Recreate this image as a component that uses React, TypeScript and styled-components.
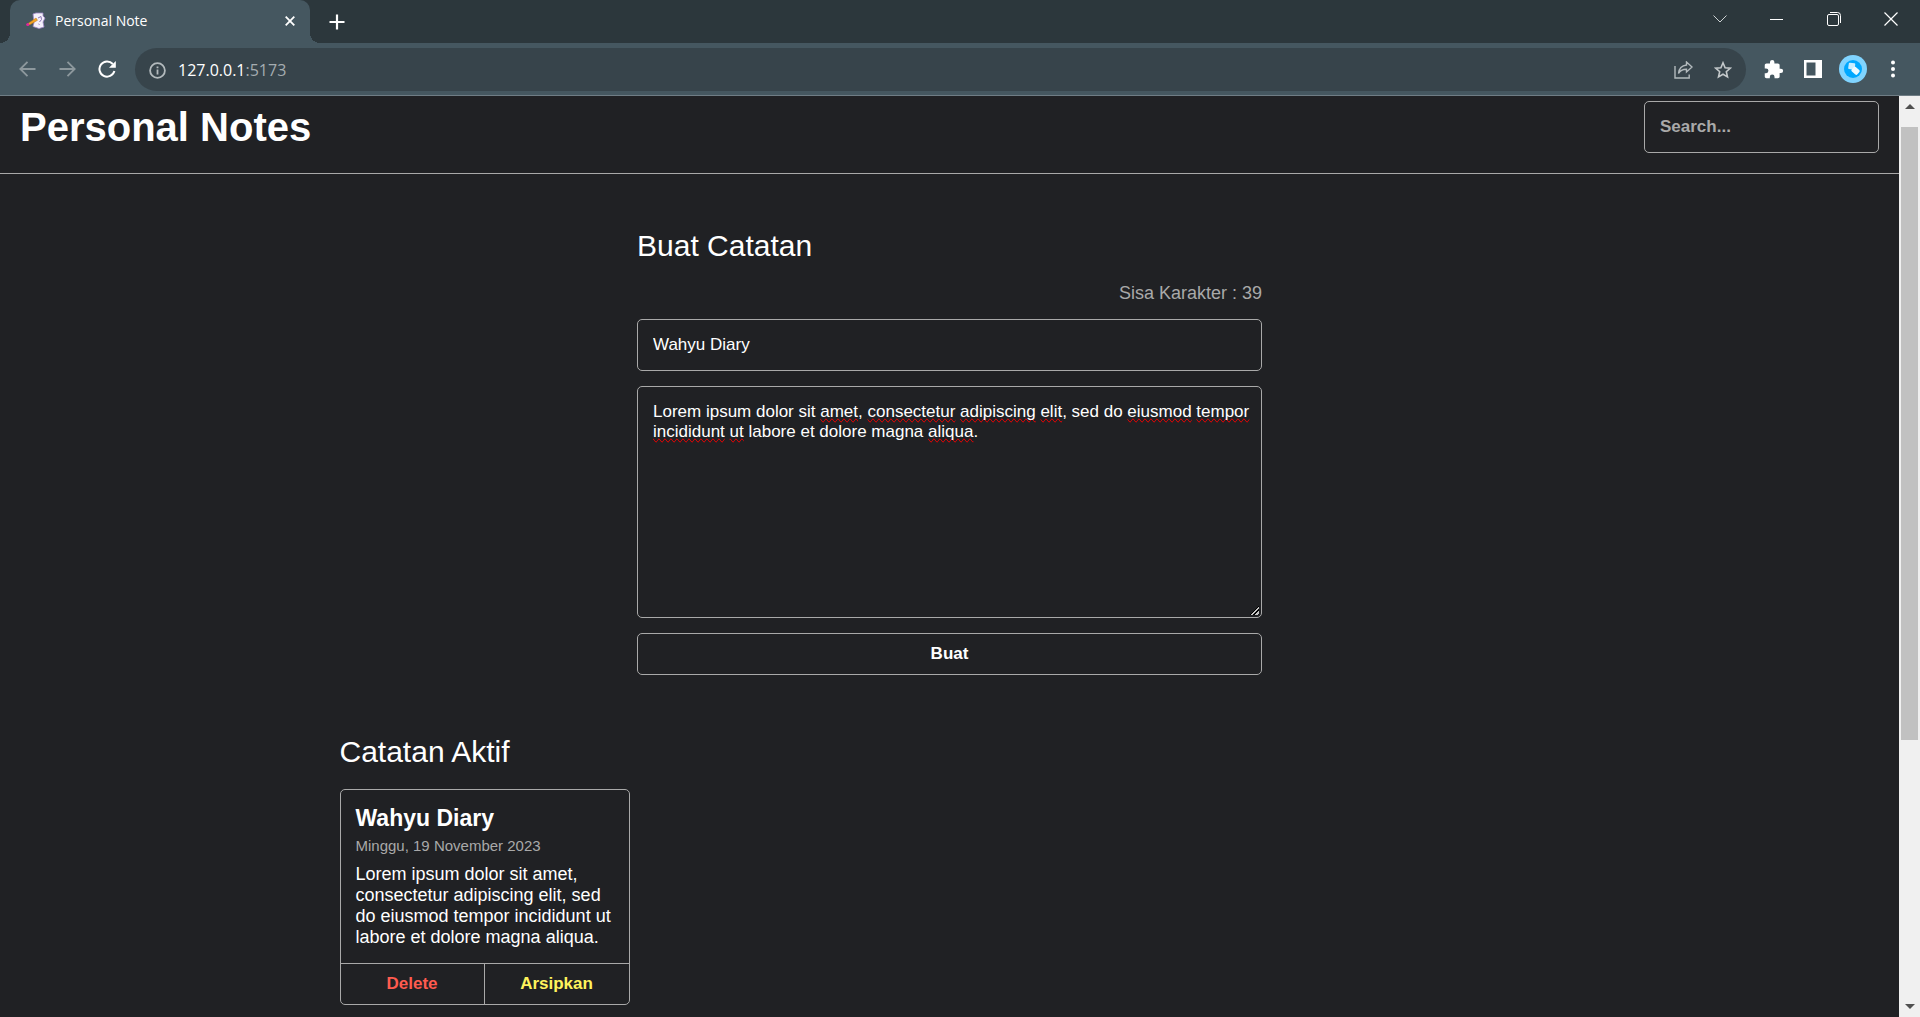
import React, { useState } from "react";
import styled, { createGlobalStyle, css } from "styled-components";

const SANS = `"Liberation Sans", Arial, Helvetica, sans-serif`;
const UI = `"Open Sans", "Segoe UI", sans-serif`;

const GlobalStyle = createGlobalStyle`
  *, *::before, *::after { box-sizing: border-box; }
  body { margin: 0; background: #202124; color: #fff; font-family: ${SANS}; overflow: hidden; }
  h1, h2, h3, p { margin: 0; }
  button, input, textarea { font-family: inherit; color: inherit; background: none; border: 0; padding: 0; margin: 0; }
  button { cursor: pointer; }
  svg { display: block; }
`;

const Window = styled.div`
  display: flex;
  flex-direction: column;
  height: 100vh;
`;

const TabStrip = styled.div`
  flex: none;
  display: flex;
  height: 43px;
  padding: 0 1px 0 10px;
  background: #2c373c;
  font-family: ${UI};
`;

const Tab = styled.div`
  position: relative;
  display: flex;
  align-items: center;
  gap: 9px;
  width: 300px;
  padding: 0 12px 2px 16px;
  border-radius: 10px 10px 0 0;
  background: #455760;
  font-size: 14px;
  line-height: 20px;

  &::before,
  &::after {
    content: "";
    position: absolute;
    bottom: 0;
    width: 10px;
    height: 10px;
  }
  &::before {
    right: 100%;
    background: radial-gradient(circle at 0 0, transparent 10px, #455760 10px);
  }
  &::after {
    left: 100%;
    background: radial-gradient(circle at 100% 0, transparent 10px, #455760 10px);
  }
`;

const TabTitle = styled.span`
  flex: 1;
`;

const IconButton = styled.button<{ $w: number; $dim?: boolean }>`
  flex: none;
  display: grid;
  place-items: center;
  width: ${(p) => p.$w}px;
  color: ${(p) => (p.$dim ? "#8d989d" : "#fff")};
`;

const WindowControls = styled.div`
  display: flex;
  margin-left: auto;
  height: 38px;
`;

const Toolbar = styled.div`
  flex: none;
  display: flex;
  align-items: center;
  height: 53px;
  padding: 0 7px;
  border-bottom: 1px solid #6f7d85;
  background: #455760;
`;

const Omnibox = styled.div`
  flex: 1;
  display: flex;
  align-items: center;
  height: 43px;
  margin: 0 7px 0 8px;
  padding: 2px 3px 0 3px;
  border-radius: 22px;
  background: #37444b;
  font-family: ${UI};
  font-size: 16px;
  line-height: 22px;
`;

const Address = styled.span`
  flex: 1;
  padding-left: 2px;
`;

const Port = styled.span`
  color: #a5adb1;
`;

const Viewport = styled.div`
  flex: 1;
  display: flex;
  min-height: 0;
`;

const Page = styled.div`
  flex: 1;
  min-width: 0;
  overflow: hidden;
`;

const Header = styled.header`
  display: flex;
  align-items: center;
  justify-content: space-between;
  padding: 5px 20px 20px;
  border-bottom: 1px solid #a9a9a9;
`;

const SiteTitle = styled.h1`
  font-size: 40px;
  line-height: 46px;
`;

const fieldStyle = css`
  display: block;
  padding: 15px 10px 15px 15px;
  border: 1px solid #a9a9a9;
  border-radius: 5px;
  font-size: 17px;
  line-height: 20px;
  outline: none;
`;

const TextInput = styled.input`
  ${fieldStyle}
  width: 100%;
  height: 52px;
`;

const SearchInput = styled.input`
  ${fieldStyle}
  width: 235px;
  height: 52px;
  font-weight: 700;
  &::placeholder { color: #a9a9a9; opacity: 1; }
`;

const Main = styled.main`
  display: flex;
  flex-direction: column;
  align-items: center;
  gap: 60px;
  padding: 55px 20px 20px;
`;

const Heading = styled.h2`
  margin-bottom: 21px;
  font-size: 30px;
  font-weight: 400;
  line-height: 33px;
`;

const NoteForm = styled.form`
  display: flex;
  flex-direction: column;
  gap: 15px;
  width: 100%;
  max-width: 625px;
`;

const FormTop = styled.div`
  display: flex;
  flex-direction: column;
`;

const Remaining = styled.p`
  color: #a9a9a9;
  font-size: 18px;
  line-height: 21px;
  text-align: right;
`;

const EditorWrap = styled.div`
  position: relative;
`;

const SpellingLayer = styled.div`
  ${fieldStyle}
  position: absolute;
  inset: 0;
  border-color: transparent;
  color: transparent;
  white-space: pre-wrap;
  pointer-events: none;
`;

const Misspelled = styled.span`
  text-decoration-line: spelling-error;
`;

const Editor = styled.textarea`
  ${fieldStyle}
  position: relative;
  width: 100%;
  height: 232px;
  resize: vertical;

  &::-webkit-resizer {
    background: linear-gradient(135deg, transparent 50%, #000 50% 57%, #c4c4c4 57% 68%, #000 68% 79%, #c4c4c4 79% 90%, transparent 90%)
      calc(100% - 2px) calc(100% - 2px) / 10px 10px no-repeat;
  }
`;

const SubmitButton = styled.button`
  height: 42px;
  border: 1px solid #a9a9a9;
  border-radius: 5px;
  font-size: 17px;
  font-weight: 700;
`;

const NoteSection = styled.section`
  width: 100%;
  max-width: 1220px;
`;

const NoteGrid = styled.div`
  display: grid;
  grid-template-columns: repeat(auto-fill, 290px);
  gap: 20px;
`;

const Card = styled.article`
  border: 1px solid #a9a9a9;
  border-radius: 5px;
`;

const CardBody = styled.div`
  padding: 15px;
`;

const CardTitle = styled.h3`
  font-size: 23px;
  line-height: 26px;
`;

const CardDate = styled.p`
  margin: 6px 0 10px;
  color: #a9a9a9;
  font-size: 15px;
  line-height: 17px;
`;

const CardText = styled.p`
  font-size: 18px;
  line-height: 21px;
`;

const CardActions = styled.div`
  display: grid;
  grid-template-columns: 1fr 1fr;
  border-top: 1px solid #a9a9a9;
`;

const CardAction = styled.button<{ $color: string }>`
  height: 40px;
  color: ${(p) => p.$color};
  font-size: 17px;
  font-weight: 700;
  &:not(:last-child) { border-right: 1px solid #a9a9a9; }
`;

const ScrollTrack = styled.div`
  flex: none;
  display: flex;
  flex-direction: column;
  align-items: center;
  width: 21px;
  background: #f0f0f0;
`;

const ScrollArrow = styled.div`
  flex: none;
  display: grid;
  place-items: center;
  height: 21px;
  color: #505050;
`;

const ScrollRail = styled.div`
  flex: 1;
  display: grid;
  grid-template-rows: 12fr 5fr;
  width: 17px;
  padding-top: 10px;
`;

const ScrollThumb = styled.div`
  background: #c1c1c1;
`;

const words: [string, boolean][] = [
  ["Lorem ipsum dolor sit ", false], ["amet", true], [", ", false], ["consectetur", true],
  [" ", false], ["adipiscing", true], [" ", false], ["elit", true], [", sed do ", false],
  ["eiusmod", true], [" ", false], ["tempor", true], [" ", false], ["incididunt", true],
  [" ", false], ["ut", true], [" labore et dolore magna ", false], ["aliqua", true], [".", false],
];
const lorem = words.map(([w]) => w).join("");

const NoteIcon = () => (
  <svg width="20" height="18" viewBox="0 0 20 18">
    <path d="M7 2l3-1 7 0 0 3 2 2-2 4 1 5-5 1.500-6-2 1-4z" fill="#f4f0fb" stroke="#9d86c4" strokeWidth=".8" />
    <path d="M12 6l3-1.500.5 3-2 2.500M12.500 12l1 .5" fill="none" stroke="#8b74b5" strokeWidth="1" />
    <path d="M2 11.500L10 6l1.500 2.300L3.500 13z" fill="#f5a524" stroke="#b9731c" strokeWidth=".5" />
    <circle cx="1.800" cy="12.500" r="1.600" fill="#e2269b" />
  </svg>
);

export default function App() {
  const [title, setTitle] = useState("Wahyu Diary");
  const [body, setBody] = useState(lorem);

  return (
    <>
      <GlobalStyle />
      <Window>
        <TabStrip>
          <Tab>
            <NoteIcon />
            <TabTitle>Personal Note</TabTitle>
            <IconButton $w={16} aria-label="Close tab">
              <svg width="10" height="10" viewBox="0 0 10 10" stroke="currentColor" strokeWidth="1.800"><path d="M.7.7l8.600 8.600M9.300.7L.7 9.300" /></svg>
            </IconButton>
          </Tab>
          <IconButton $w={54} aria-label="New tab">
            <svg width="16" height="16" viewBox="0 0 16 16" stroke="currentColor" strokeWidth="2.200"><path d="M8 .5v15M.5 8h15" /></svg>
          </IconButton>
          <WindowControls>
            <IconButton $w={57} aria-label="Search tabs">
              <svg width="14" height="8" viewBox="0 0 14 8" fill="none" stroke="#ccd1d3"><path d="M.5.5L7 7 13.500.5" /></svg>
            </IconButton>
            <IconButton $w={57} aria-label="Minimize">
              <svg width="13" height="13" viewBox="0 0 13 13" stroke="currentColor"><path d="M0 6.500h13" /></svg>
            </IconButton>
            <IconButton $w={57} aria-label="Restore">
              <svg width="14" height="14" viewBox="0 0 14 14" fill="none" stroke="currentColor"><rect x=".5" y="2.500" width="11" height="11" rx="1.500" /><path d="M3 .5h7.500a3 3 0 0 1 3 3V11" /></svg>
            </IconButton>
            <IconButton $w={57} aria-label="Close">
              <svg width="14" height="14" viewBox="0 0 14 14" stroke="currentColor" strokeWidth="1.200"><path d="M.5.5l13 13M13.500.5l-13 13" /></svg>
            </IconButton>
          </WindowControls>
        </TabStrip>

        <Toolbar>
          <IconButton $w={40} $dim aria-label="Back">
            <svg width="17" height="16" viewBox="0 0 17 16" fill="none" stroke="currentColor" strokeWidth="1.800"><path d="M16.500 8H1.500M8.500.8L1.300 8l7.200 7.200" /></svg>
          </IconButton>
          <IconButton $w={40} $dim aria-label="Forward">
            <svg width="17" height="16" viewBox="0 0 17 16" fill="none" stroke="currentColor" strokeWidth="1.800"><path d="M.5 8h15M8.500.8L15.700 8l-7.200 7.200" /></svg>
          </IconButton>
          <IconButton $w={40} aria-label="Reload">
            <svg width="18" height="18" viewBox="0 0 18 18"><path d="M14.800 4A7.600 7.600 0 1 0 16.400 11" fill="none" stroke="currentColor" strokeWidth="2" /><path d="M17.800 1v6.800H11z" fill="currentColor" /></svg>
          </IconButton>
          <Omnibox>
            <IconButton $w={38} aria-label="Site information">
              <svg width="17" height="17" viewBox="0 0 17 17" fill="none" stroke="#b3babd" strokeWidth="1.800"><circle cx="8.500" cy="8.500" r="7.400" /><path d="M8.500 7.500v5M8.500 4.500v1.700" /></svg>
            </IconButton>
            <Address>127.0.0.1<Port>:5173</Port></Address>
            <IconButton $w={40} aria-label="Share">
              <svg width="19" height="18" viewBox="0 0 19 18" fill="none" stroke="#b3babd" strokeWidth="1.400"><path d="M1 5V17H15.200V13.500" /><path d="M12.500 1l5.500 5-5.500 5V8.300C8.500 8.300 6 9.500 4.500 12.500 5 8 8 4.500 12.500 4z" /></svg>
            </IconButton>
            <IconButton $w={40} aria-label="Bookmark">
              <svg width="18" height="18" viewBox="0 0 18 18" fill="none" stroke="#c3c8ca" strokeWidth="1.600"><path d="M9 1.800l2.100 4.900 5.200.5-4 3.500 1.200 5.200L9 13.200l-4.500 2.700 1.200-5.200-4-3.500 5.200-.5z" /></svg>
            </IconButton>
          </Omnibox>
          <IconButton $w={40} aria-label="Extensions">
            <svg width="21" height="21" viewBox="0 0 24 24" fill="currentColor"><path d="M20.500 11H19V7c0-1.100-.9-2-2-2h-4V3.500a2.500 2.500 0 0 0-5 0V5H4c-1.100 0-2 .9-2 2v3.800h1.500a2.700 2.700 0 0 1 0 5.400H2V20c0 1.100.9 2 2 2h3.800v-1.500a2.700 2.700 0 0 1 5.400 0V22H17c1.100 0 2-.9 2-2v-4h1.500a2.500 2.500 0 0 0 0-5z" /></svg>
          </IconButton>
          <IconButton $w={40} aria-label="Side panel">
            <svg width="18" height="18" viewBox="0 0 18 18" fill="currentColor" fillRule="evenodd"><path d="M0 0h18v18H0zM2.500 2.500v13h9v-13z" /></svg>
          </IconButton>
          <IconButton $w={40} aria-label="Profile">
            <svg width="28" height="28" viewBox="0 0 28 28"><circle cx="14" cy="14" r="14" fill="#80d4ff" /><circle cx="14" cy="14" r="9" fill="#00a8ff" /><rect x="9.500" y="8" width="6.500" height="6.500" rx="1" transform="rotate(8 13 11)" fill="#c9edff" /><rect x="13.500" y="12" width="6" height="7.500" rx="1.500" transform="rotate(-50 16.500 15.700)" fill="#eefaff" /></svg>
          </IconButton>
          <IconButton $w={40} aria-label="Menu">
            <svg width="4" height="18" viewBox="0 0 4 18" fill="currentColor"><circle cx="2" cy="2.500" r="2" /><circle cx="2" cy="9" r="2" /><circle cx="2" cy="15.500" r="2" /></svg>
          </IconButton>
        </Toolbar>

        <Viewport>
          <Page>
            <Header>
              <SiteTitle>Personal Notes</SiteTitle>
              <SearchInput type="search" placeholder="Search..." aria-label="Search" />
            </Header>
            <Main>
              <NoteForm onSubmit={(e) => e.preventDefault()}>
                <FormTop>
                  <Heading>Buat Catatan</Heading>
                  <Remaining>Sisa Karakter : {50 - title.length}</Remaining>
                </FormTop>
                <TextInput aria-label="Judul" maxLength={50} value={title} onChange={(e) => setTitle(e.target.value)} />
                <EditorWrap>
                  <SpellingLayer aria-hidden="true">
                    {body === lorem && words.map(([w, bad], i) => (bad ? <Misspelled key={i}>{w}</Misspelled> : w))}
                  </SpellingLayer>
                  <Editor aria-label="Catatan" value={body} spellCheck={false} onChange={(e) => setBody(e.target.value)} />
                </EditorWrap>
                <SubmitButton type="submit">Buat</SubmitButton>
              </NoteForm>
              <NoteSection>
                <Heading>Catatan Aktif</Heading>
                <NoteGrid>
                  <Card>
                    <CardBody>
                      <CardTitle>Wahyu Diary</CardTitle>
                      <CardDate>Minggu, 19 November 2023</CardDate>
                      <CardText>{lorem}</CardText>
                    </CardBody>
                    <CardActions>
                      <CardAction $color="#ff5b4f">Delete</CardAction>
                      <CardAction $color="#fff35c">Arsipkan</CardAction>
                    </CardActions>
                  </Card>
                </NoteGrid>
              </NoteSection>
            </Main>
          </Page>
          <ScrollTrack aria-hidden="true">
            <ScrollArrow><svg width="10" height="5" viewBox="0 0 10 5" fill="currentColor"><path d="M5 0l5 5H0z" /></svg></ScrollArrow>
            <ScrollRail><ScrollThumb /></ScrollRail>
            <ScrollArrow><svg width="10" height="5" viewBox="0 0 10 5" fill="currentColor"><path d="M0 0h10L5 5z" /></svg></ScrollArrow>
          </ScrollTrack>
        </Viewport>
      </Window>
    </>
  );
}
